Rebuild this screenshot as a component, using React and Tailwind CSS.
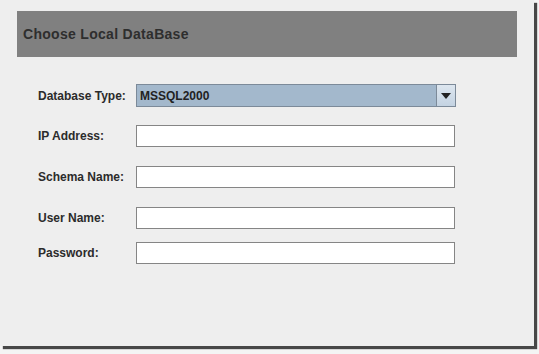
import React from 'react';

const fields = [
  { label: 'IP Address:', mt: 'mt-[18px]' },
  { label: 'Schema Name:', mt: 'mt-[19px]' },
  { label: 'User Name:', mt: 'mt-[19px]' },
  { label: 'Password:', mt: 'mt-[13px]' },
];

export default function App() {
  return (
    <div className="w-[539px] h-[354px] bg-[#f4f4f4] font-['Liberation_Sans',Arial,sans-serif]">
      <div className="w-[534px] h-[346px] bg-[#eeeeee] shadow-[3px_3px_1px_rgba(40,40,40,0.85)] pt-[11px] pl-[17px]">
        <div className="w-[500px] h-[46px] bg-[#808080] flex items-center pl-[6px]">
          <span className="text-[14px] font-bold tracking-[0.3px] text-[#2e2e2e]">Choose Local DataBase</span>
        </div>

        <div className="pl-[21px] pt-[27px] text-[12px] font-bold text-[#2b2b2b]">
          <div className="flex items-center h-[23px]">
            <span className="w-[98px]">Database Type:</span>
            <div className="w-[320px] h-[23px] flex border border-[#7c8a99] bg-[#a3b8cc]">
              <span className="flex-1 pl-[3px] flex items-center text-[#222]">MSSQL2000</span>
              <div className="w-[19px] h-full border-l border-[#7c8a99] bg-gradient-to-b from-[#dde6ef] to-[#c4d3e2] flex items-center justify-center">
                <svg width="10" height="6" viewBox="0 0 10 6">
                  <path d="M0 0 H10 L5 6 Z" fill="#222" />
                </svg>
              </div>
            </div>
          </div>

          {fields.map((f) => (
            <div key={f.label} className={`flex items-center h-[22px] ${f.mt}`}>
              <span className="w-[98px]">{f.label}</span>
              <div className="w-[319px] h-[22px] bg-white border border-[#858585]" />
            </div>
          ))}
        </div>
      </div>
    </div>
  );
}
